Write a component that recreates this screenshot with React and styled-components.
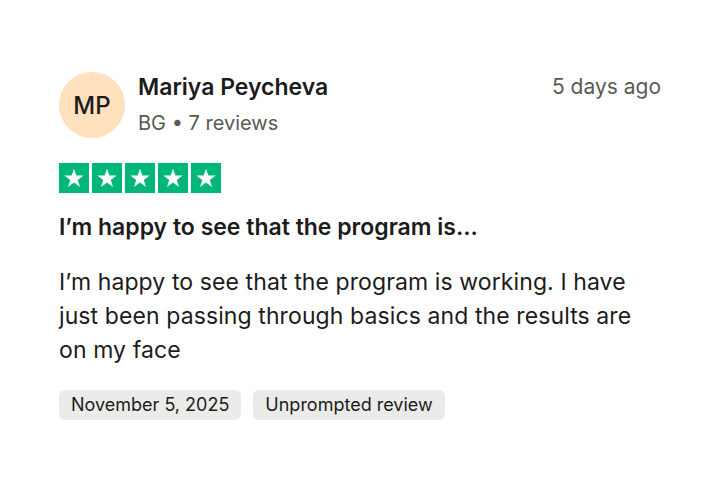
import React from 'react';
import styled, { createGlobalStyle } from 'styled-components';

const GlobalStyle = createGlobalStyle`
    html, body {
        margin: 0;
        padding: 0;
        background: #ffffff;
    }
    body {
        font-family: Inter, 'Noto Sans', sans-serif;
        color: #1c1c1c;
    }
`

const Card = styled.article`
    width: 602px;
    padding: 72px 59px 40px;
    display: flex;
    flex-direction: column;
`

const Header = styled.header`
    display: flex;
    align-items: flex-start;
`

const Avatar = styled.div`
    width: 66px;
    height: 66px;
    border-radius: 50%;
    background: #ffe1bd;
    color: #1c1c1c;
    display: flex;
    align-items: center;
    justify-content: center;
    font-size: 24px;
    font-weight: 500;
    flex-shrink: 0;
`

const Consumer = styled.div`
    display: flex;
    flex-direction: column;
    margin-left: 13px;
    flex: 1;
`

const Name = styled.div`
    font-size: 23px;
    line-height: 28px;
    font-weight: 600;
    color: #1c1c1c;
    margin-top: 1px;
`

const Meta = styled.div`
    font-size: 20px;
    line-height: 26px;
    color: #5a5a55;
    margin-top: 9px;
`

const Time = styled.time`
    font-size: 21px;
    line-height: 28px;
    color: #5a5a55;
    margin-top: 1px;
`

const Stars = styled.div`
    display: flex;
    gap: 3px;
    margin-top: 25px;
`

const StarBox = styled.div`
    width: 30px;
    height: 30px;
    background: ${p => (p.$filled ? '#00b67a' : '#dcdce6')};
    display: flex;
    align-items: center;
    justify-content: center;
`

const Title = styled.h2`
    margin: 20px 0 0;
    font-size: 23px;
    line-height: 28px;
    font-weight: 600;
    color: #1c1c1c;
`

const Body = styled.p`
    margin: 24px 0 0;
    font-size: 23px;
    line-height: 34px;
    letter-spacing: 0.1px;
    color: #1c1c1c;
`

const Tags = styled.div`
    display: flex;
    gap: 12px;
    margin-top: 23px;
`

const Tag = styled.span`
    height: 30px;
    padding: 0 12px;
    border-radius: 6px;
    background: #ebebea;
    font-size: 18px;
    line-height: 30px;
    color: #1c1c1c;
`

const Star = () => (
    <svg width="22" height="22" viewBox="0 0 24 24">
        <path
            fill="#ffffff"
            d="M12 1.8l2.6 7.6h8l-6.5 4.7 2.5 7.7L12 17l-6.6 4.8 2.5-7.7L1.4 9.4h8z"
        />
    </svg>
);

const App = () => {
    const rating = 5;

    return (
        <>
            <GlobalStyle />
            <Card>
                <Header>
                    <Avatar>MP</Avatar>
                    <Consumer>
                        <Name>Mariya Peycheva</Name>
                        <Meta>BG • 7 reviews</Meta>
                    </Consumer>
                    <Time>5 days ago</Time>
                </Header>
                <Stars>
                    {[1, 2, 3, 4, 5].map(i => (
                        <StarBox key={i} $filled={i <= rating}>
                            <Star />
                        </StarBox>
                    ))}
                </Stars>
                <Title>I’m happy to see that the program is...</Title>
                <Body>
                    I’m happy to see that the program is working. I have just been passing
                    through basics and the results are on my face
                </Body>
                <Tags>
                    <Tag>November 5, 2025</Tag>
                    <Tag>Unprompted review</Tag>
                </Tags>
            </Card>
        </>
    );
};

export default App;
